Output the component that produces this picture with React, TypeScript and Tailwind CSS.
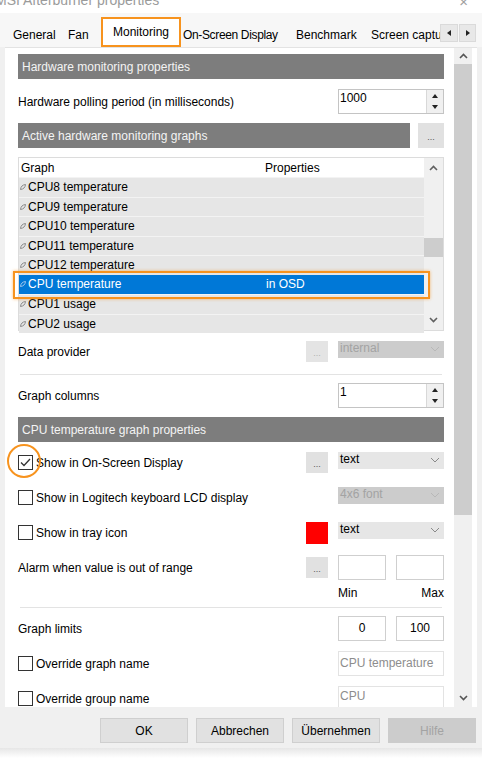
import React from "react";

function ChevUp({ color = "#606060" }: { color?: string }) {
  return (
    <svg width="9" height="6" viewBox="0 0 9 6">
      <path d="M1 5 L4.5 1.5 L8 5" fill="none" stroke={color} strokeWidth="1.6" />
    </svg>
  );
}
function ChevDown({ color = "#606060" }: { color?: string }) {
  return (
    <svg width="9" height="6" viewBox="0 0 9 6">
      <path d="M1 1 L4.5 4.5 L8 1" fill="none" stroke={color} strokeWidth="1.6" />
    </svg>
  );
}
function DropChev({ color = "#8a8a8a" }: { color?: string }) {
  return (
    <svg width="10" height="6" viewBox="0 0 10 6">
      <path d="M1 1 L5 5 L9 1" fill="none" stroke={color} strokeWidth="1" />
    </svg>
  );
}
function TriUp() {
  return (
    <svg width="6" height="4" viewBox="0 0 6 4">
      <path d="M0 4 L3 0 L6 4 Z" fill="#222" />
    </svg>
  );
}
function TriDown() {
  return (
    <svg width="6" height="4" viewBox="0 0 6 4">
      <path d="M0 0 L3 4 L6 0 Z" fill="#222" />
    </svg>
  );
}
function Leaf({ color = "#8a8a8a" }: { color?: string }) {
  return (
    <svg width="6" height="6" viewBox="0 0 6 6">
      <path d="M0.5 5.5 C0.8 2.5 2.5 0.8 5.5 0.5 C5.2 3.5 3.5 5.2 0.5 5.5 Z" fill="none" stroke={color} strokeWidth="1" />
    </svg>
  );
}

function Header({ children }: { children: React.ReactNode }) {
  return (
    <div className="h-[25px] bg-[#7d7d7d] text-[#f4f4f4] flex items-center pl-[4px] text-[12px]">
      {children}
    </div>
  );
}

function Ellipsis({ disabled = false }: { disabled?: boolean }) {
  return (
    <div
      className={
        "w-[22px] h-[21px] flex items-center justify-center text-[9px] leading-none pt-[3px] " +
        (disabled ? "bg-[#e4e4e4] text-[#b0b0b0]" : "bg-[#e1e1e1] text-[#555]")
      }
    >
      ...
    </div>
  );
}

function Drop({ text, disabled = false }: { text: string; disabled?: boolean }) {
  return (
    <div
      className={
        "w-[106px] h-[17px] flex items-start justify-between pl-[2px] pr-[4px] leading-[15px] " +
        (disabled ? "bg-[#cccccc] text-[#a3a3a3]" : "bg-[#e6e6e6] text-black")
      }
    >
      <span>{text}</span>
      <span className="pt-[5px]">
        <DropChev color={disabled ? "#b8b8b8" : "#8a8a8a"} />
      </span>
    </div>
  );
}

function Spin({ value }: { value: string }) {
  return (
    <div className="w-[106px] h-[25px] flex border border-[#c4c4c4] bg-white">
      <div className="flex-1 pl-[1px] leading-[15px] pt-[1px]">{value}</div>
      <div className="w-[17px] flex flex-col bg-[#f0f0f0] border-l border-[#d8d8d8]">
        <div className="flex-1 flex items-center justify-center">
          <TriUp />
        </div>
        <div className="flex-1 flex items-center justify-center">
          <TriDown />
        </div>
      </div>
    </div>
  );
}

function Check({ checked = false }: { checked?: boolean }) {
  return (
    <div className="w-[15px] h-[15px] border border-[#333] bg-white flex items-center justify-center shrink-0">
      {checked && (
        <svg width="11" height="9" viewBox="0 0 11 9">
          <path d="M1 4.5 L4 7.5 L10 1" fill="none" stroke="#333" strokeWidth="1.3" />
        </svg>
      )}
    </div>
  );
}

const rows = [
  "CPU8 temperature",
  "CPU9 temperature",
  "CPU10 temperature",
  "CPU11 temperature",
  "CPU12 temperature",
  "CPU temperature",
  "CPU1 usage",
  "CPU2 usage",
];

export default function App() {
  return (
    <div className="w-[482px] h-[758px] bg-[#f0f0f0] flex flex-col overflow-hidden font-['Liberation_Sans',Arial,sans-serif] text-[12px] text-black">
      {/* Title bar */}
      <div className="h-[13px] shrink-0 bg-white overflow-hidden flex justify-between">
        <div className="ml-[-5px] mt-[-9px] text-[14px] leading-[18px] text-[#9b9b9b] whitespace-nowrap">
          MSI Afterburner properties
        </div>
        <div className="mr-[14px] mt-[-7px] text-[15px] leading-[18px] text-[#a0a0a0]">×</div>
      </div>

      {/* Tabs */}
      <div className="h-[34px] shrink-0 flex items-stretch bg-[#f7f7f7]">
        <div className="w-[5px]" />
        <div className="w-[59px] pl-[8px] pt-[13px] whitespace-nowrap">General</div>
        <div className="w-[37px] pl-[4px] pt-[13px] whitespace-nowrap">Fan</div>
        <div className="w-[80px] mt-[4px] bg-white border-2 border-[#f7931e] flex justify-center pt-[4px] whitespace-nowrap relative z-10">
          Monitoring
        </div>
        <div className="w-[111px] pl-[2px] pt-[13px] whitespace-nowrap tracking-[-0.35px]">On-Screen Display</div>
        <div className="w-[71px] pl-[4px] pt-[13px] whitespace-nowrap">Benchmark</div>
        <div className="w-[77px] pl-[8px] pt-[13px] whitespace-nowrap overflow-hidden">Screen captu</div>
        <div className="flex mt-[11px] h-[18px] gap-[1px]">
          <div className="w-[18px] bg-[#e8e8e8] border border-[#dadada] flex items-center justify-center">
            <svg width="4" height="6" viewBox="0 0 4 6"><path d="M4 0 L0 3 L4 6 Z" fill="#222" /></svg>
          </div>
          <div className="w-[17px] bg-[#e8e8e8] border border-[#dadada] flex items-center justify-center">
            <svg width="4" height="6" viewBox="0 0 4 6"><path d="M0 0 L4 3 L0 6 Z" fill="#222" /></svg>
          </div>
        </div>
      </div>

      {/* Panel */}
      <div className="mx-[5px] h-[660px] shrink-0 bg-white flex items-start overflow-hidden border-t border-[#e3e3e3]">
        <div className="w-[426px] ml-[13px] shrink-0 flex flex-col [&>*]:shrink-0">
          <div className="mt-[6px]">
            <Header>Hardware monitoring properties</Header>
          </div>

          <div className="mt-[10px] h-[25px] flex items-center justify-between">
            <span>Hardware polling period (in milliseconds)</span>
            <Spin value="1000" />
          </div>

          <div className="mt-[9px] h-[25px] flex gap-[8px]">
            <div className="flex-1">
              <Header>Active hardware monitoring graphs</Header>
            </div>
            <div className="w-[26px] h-[25px] bg-[#e1e1e1] flex items-center justify-center text-[9px] text-[#555] pt-[4px]">
              ...
            </div>
          </div>

          {/* List */}
          <div className="mt-[9px] h-[174px] border border-[#dcdcdc] flex">
            <div className="flex-1 flex flex-col">
              <div className="h-[19px] shrink-0 bg-white flex items-center">
                <span className="pl-[2px] w-[246px]">Graph</span>
                <span>Properties</span>
              </div>
              {rows.map((r) => {
                const sel = r === "CPU temperature";
                return (
                  <div
                    key={r}
                    className={
                      "h-[19.5px] shrink-0 flex items-center relative " +
                      (sel ? "bg-[#0078d7] text-white z-10" : "bg-[#e6e6e6] border-t border-[#f3f3f3]")
                    }
                  >
                    <span className="w-[9px] pl-[1px] flex items-center">
                      <Leaf color={sel ? "#9cc4ea" : "#8a8a8a"} />
                    </span>
                    <span className="w-[238px] whitespace-nowrap">{r}</span>
                    {sel && <span>in OSD</span>}
                    {sel && (
                      <div className="absolute -left-[6px] -right-[6px] -top-[4px] -bottom-[5px] border-2 border-[#f7931e] shadow-[0_0_3px_rgba(247,147,30,0.6)]" />
                    )}
                  </div>
                );
              })}
            </div>
            <div className="w-[19px] bg-[#f0f0f0] flex flex-col items-center">
              <div className="h-[20px] flex items-center justify-center">
                <ChevUp />
              </div>
              <div className="mt-[60px] w-[19px] h-[19px] bg-[#cdcdcd]" />
              <div className="flex-1" />
              <div className="h-[20px] flex items-center justify-center">
                <ChevDown />
              </div>
            </div>
          </div>

          {/* Data provider */}
          <div className="mt-[10px] h-[21px] flex justify-between">
            <span className="self-center">Data provider</span>
            <div className="flex gap-[10px] items-start">
              <Ellipsis disabled />
              <Drop text="internal" disabled />
            </div>
          </div>

          <div className="mt-[12px] mx-[2px] h-[1px] bg-[#e3e3e3]" />

          <div className="mt-[8px] h-[25px] flex items-center justify-between">
            <span>Graph columns</span>
            <Spin value="1" />
          </div>

          <div className="mt-[9px]">
            <Header>CPU temperature graph properties</Header>
          </div>

          {/* OSD row */}
          <div className="mt-[10px] h-[21px] flex justify-between">
            <div className="flex items-center gap-[3px] relative">
              <Check checked />
              <span>Show in On-Screen Display</span>
              <div className="absolute left-[-11px] top-[-8px] w-[34px] h-[34px] rounded-full border-2 border-[#f7931e]" />
            </div>
            <div className="flex gap-[10px] items-start">
              <Ellipsis />
              <Drop text="text" />
            </div>
          </div>

          {/* Logitech */}
          <div className="mt-[14px] h-[21px] flex justify-between">
            <div className="flex items-center gap-[3px]">
              <Check />
              <span>Show in Logitech keyboard LCD display</span>
            </div>
            <div className="flex gap-[10px] items-start">
              <Drop text="4x6 font" disabled />
            </div>
          </div>

          {/* Tray */}
          <div className="mt-[14px] h-[21px] flex justify-between">
            <div className="flex items-center gap-[3px]">
              <Check />
              <span>Show in tray icon</span>
            </div>
            <div className="flex gap-[10px] items-start">
              <div className="w-[22px] h-[22px] bg-[#ff0000]" />
              <Drop text="text" />
            </div>
          </div>

          {/* Alarm */}
          <div className="mt-[12px] h-[25px] flex justify-between">
            <span className="self-center">Alarm when value is out of range</span>
            <div className="flex items-center">
              <Ellipsis />
              <div className="ml-[10px] w-[48px] h-[25px] border border-[#cfcfcf] bg-white" />
              <div className="ml-[10px] w-[48px] h-[25px] border border-[#cfcfcf] bg-white" />
            </div>
          </div>
          <div className="mt-[4px] h-[18px] flex justify-end items-center">
            <div className="w-[106px] flex justify-between">
              <span>Min</span>
              <span>Max</span>
            </div>
          </div>

          <div className="mt-[5px] mx-[2px] h-[1px] bg-[#e3e3e3]" />

          <div className="mt-[8px] h-[25px] flex justify-between">
            <span className="self-center">Graph limits</span>
            <div className="flex">
              <div className="w-[48px] h-[25px] border border-[#cfcfcf] bg-white flex justify-center pt-[2px]">0</div>
              <div className="ml-[10px] w-[48px] h-[25px] border border-[#cfcfcf] bg-white flex justify-center pt-[2px]">100</div>
            </div>
          </div>

          <div className="mt-[10px] h-[25px] flex justify-between">
            <div className="flex items-center gap-[3px]">
              <Check />
              <span>Override graph name</span>
            </div>
            <div className="w-[106px] h-[25px] border border-[#e3e3e3] bg-white text-[#8d8d8d] pl-[1px] pt-[2px] whitespace-nowrap">
              CPU temperature
            </div>
          </div>

          <div className="mt-[10px] h-[25px] flex justify-between">
            <div className="flex items-center gap-[3px]">
              <Check />
              <span>Override group name</span>
            </div>
            <div className="w-[106px] h-[25px] border border-[#e3e3e3] bg-white text-[#8d8d8d] pl-[1px] pt-[0px]">
              CPU
            </div>
          </div>
        </div>

        {/* Main scrollbar */}
        <div className="ml-[10px] w-[18px] h-full shrink-0 bg-[#f0f0f0] flex flex-col">
          <div className="h-[16px] flex items-center justify-center">
            <ChevUp color="#555" />
          </div>
          <div className="h-[451px] bg-[#cdcdcd]" />
          <div className="flex-1" />
          <div className="h-[18px] flex items-center justify-center">
            <ChevDown color="#555" />
          </div>
        </div>
      </div>

      {/* Buttons */}
      <div className="mt-[11px] h-[25px] shrink-0 flex pl-[100px] gap-[8px]">
        <div className="w-[88px] bg-[#e1e1e1] border border-[#cfcfcf] flex items-center justify-center">OK</div>
        <div className="w-[88px] bg-[#e1e1e1] border border-[#cfcfcf] flex items-center justify-center">Abbrechen</div>
        <div className="w-[88px] bg-[#e1e1e1] border border-[#cfcfcf] flex items-center justify-center">Übernehmen</div>
        <div className="w-[88px] bg-[#cccccc] text-[#a3a3a3] flex items-center justify-center">Hilfe</div>
      </div>

      <div className="mt-[5px] flex-1 bg-gradient-to-b from-[#e6e6e6] to-white" />
    </div>
  );
}
